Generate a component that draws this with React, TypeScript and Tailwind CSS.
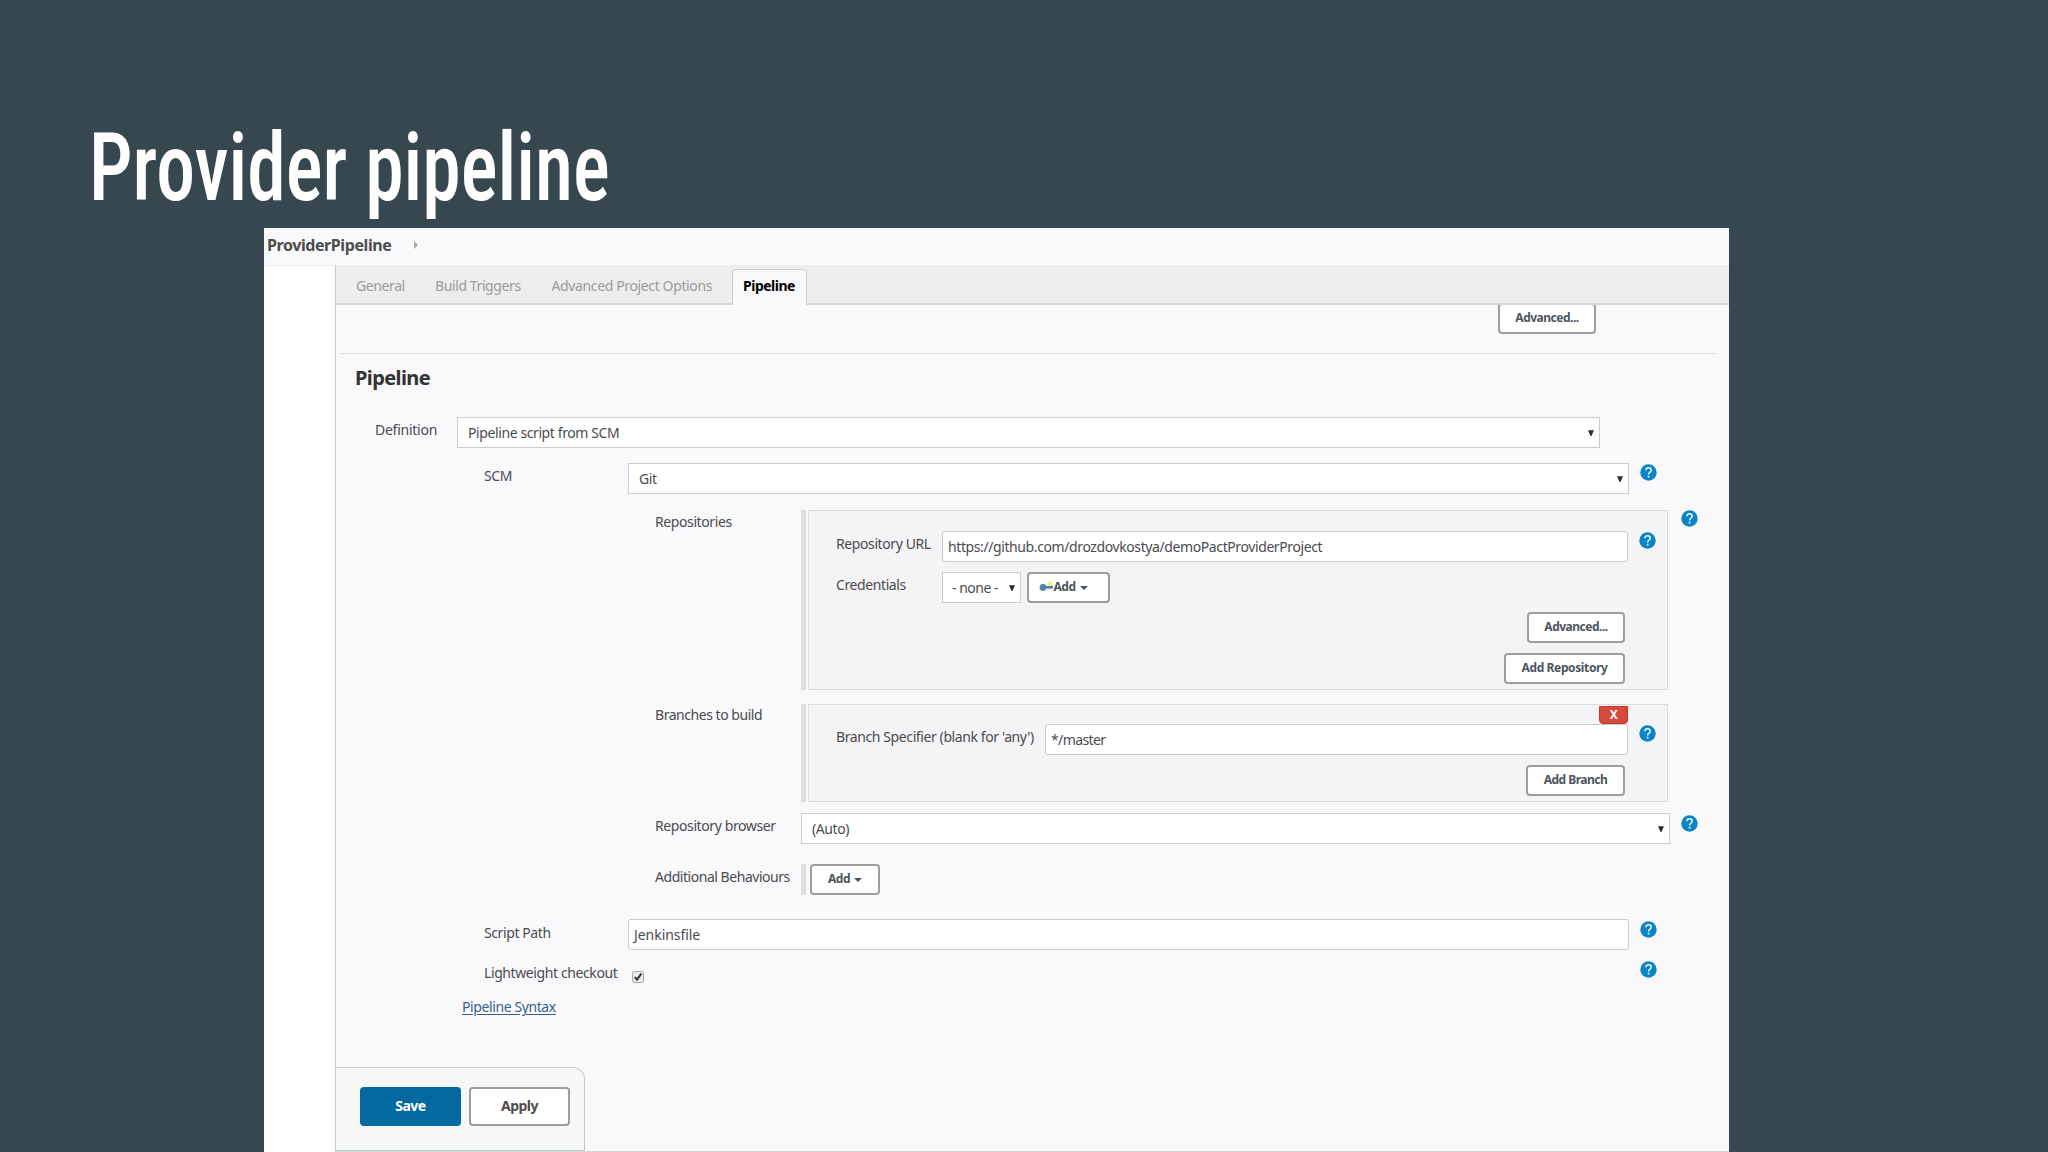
import type { ReactNode } from 'react';
import clsx from 'clsx';

const tabs = [
  { label: 'General', className: 'w-[79px]' },
  { label: 'Build Triggers', className: 'w-[116.5px]' },
  { label: 'Advanced Project Options', className: 'w-[181px] tracking-[-0.37px]' },
];

function HelpIcon({ className }: { className?: string }) {
  return (
    <svg viewBox="0 0 17 17" className={clsx('h-[17px] w-[17px] shrink-0', className)}>
      <circle cx="8.5" cy="8.5" r="8.2" fill="#0c84c6" />
      <path
        d="M5.9 6.3C6 4.7 7 3.8 8.5 3.8c1.6 0 2.7 1 2.7 2.4 0 1.9-2.6 2.1-2.6 4.2"
        fill="none"
        stroke="#e9f6fc"
        strokeWidth="1.5"
      />
      <rect x="7.7" y="11.8" width="1.8" height="1.8" rx="0.5" fill="#e9f6fc" />
    </svg>
  );
}

function SelectArrow({ className }: { className?: string }) {
  return (
    <svg viewBox="0 0 6 6" className={clsx('h-[6px] w-[6px] shrink-0', className)}>
      <path d="M0 0.3h6L3.4 6h-0.8z" fill="#2b2b2b" />
    </svg>
  );
}

function Caret() {
  return (
    <svg viewBox="0 0 8 4" className="mt-px h-[4px] w-[8px] shrink-0">
      <path d="M0 0h8L4 4z" fill="#4d545d" />
    </svg>
  );
}

function KeyIcon() {
  return (
    <svg viewBox="0 0 15 14" className="h-[14px] w-[15px] shrink-0">
      <circle cx="11" cy="4" r="2.8" fill="#f1f58e" />
      <ellipse cx="4" cy="7.4" rx="3.4" ry="3.4" fill="#4f83ab" />
      <rect x="6" y="6" width="8" height="2.6" fill="#4f83ab" />
      <rect x="6" y="9.6" width="5" height="1" fill="#d5e2ea" />
    </svg>
  );
}

function Button({ children, className }: { children: ReactNode; className?: string }) {
  return (
    <button
      className={clsx(
        'flex h-[31px] shrink-0 items-center justify-center rounded-[4px] border-2 border-[#9b9da1] bg-white pb-px text-[12px] font-bold tracking-[-0.5px] whitespace-nowrap text-[#4d545d]',
        className
      )}
    >
      {children}
    </button>
  );
}

function Select({ value, className }: { value: string; className?: string }) {
  return (
    <div
      className={clsx(
        'flex h-[31px] shrink-0 items-center justify-between border border-[#cbcacf] bg-white pr-[5px] pl-[10px] whitespace-nowrap',
        className
      )}
    >
      <span>{value}</span>
      <SelectArrow />
    </div>
  );
}

function Input({ value, className }: { value: string; className?: string }) {
  return (
    <div
      className={clsx(
        'flex h-[31px] shrink-0 items-center rounded-[3px] border border-[#cbcacf] bg-white px-[5px] whitespace-nowrap',
        className
      )}
    >
      <span>{value}</span>
    </div>
  );
}

function Row({ label, labelClass, className, children }: { label: string; labelClass: string; className: string; children: ReactNode }) {
  return (
    <div className={clsx('flex items-start', className)}>
      <div className={clsx('shrink-0 pt-[3px] whitespace-nowrap', labelClass)}>{label}</div>
      {children}
    </div>
  );
}

function Chunk({ className, children }: { className: string; children: ReactNode }) {
  return (
    <div className={clsx('flex shrink-0 gap-[2px]', className)}>
      <div className="w-[5px] bg-[#dfdee1]" />
      <div className="flex flex-1 flex-col border border-[#dddce0] bg-[#f4f3f5]">{children}</div>
    </div>
  );
}

export default function App() {
  return (
    <div className="flex h-[1152px] w-[2048px] flex-col overflow-hidden bg-[#37474f] font-['Noto_Sans','Open_Sans',sans-serif]">
      <h1 className="h-[228px] shrink-0 pt-[110px] pl-[89px] font-['Roboto_Condensed',Roboto,sans-serif] text-[95px] leading-[116px] font-medium text-white">
        <span className="inline-block origin-left scale-x-[0.817] whitespace-nowrap">Provider pipeline</span>
      </h1>

      <div className="ml-[264px] flex h-[924px] w-[1465px] shrink-0 flex-col bg-[#f9f8fb] text-[14px] leading-[20px] tracking-[-0.4px] text-[#4b4b4f]">
        <div className="flex h-[37px] shrink-0 items-center bg-[#f8f9fa] pb-[3px] pl-[3px]">
          <span className="w-[147px] text-[16px] font-bold tracking-[-0.42px] text-[#4d4d4d]">ProviderPipeline</span>
          <svg viewBox="0 0 4 8" className="h-[8px] w-[4px]">
            <path d="M0 0l4 4-4 4z" fill="#a9a9ab" />
          </svg>
        </div>

        <div className="flex min-h-0 flex-1">
          <div className="w-[71px] shrink-0 border-t border-[#ececee] bg-white" />
          <div className="flex min-w-0 flex-1 flex-col border-l border-[#c6cacd]">
            <div className="flex h-[40px] shrink-0 bg-[#ededee]">
              <div className="flex w-[396px] border-b-2 border-[#d9d9db] pt-[11px] pl-[20px] text-[#9b9b9d]">
                {tabs.map((tab) => (
                  <span key={tab.label} className={clsx('shrink-0 whitespace-nowrap', tab.className)}>
                    {tab.label}
                  </span>
                ))}
              </div>
              <div className="mt-[4px] w-[75px] rounded-t-[4px] border border-b-0 border-[#cfcfd2] bg-[#f9f9fb] pt-[6px] pl-[10px] font-bold tracking-[-0.5px] text-black">
                Pipeline
              </div>
              <div className="flex-1 border-b-2 border-[#d9d9db]" />
            </div>

            <div className="flex min-h-0 flex-1 flex-col">
              <div className="ml-[4px] flex h-[49px] w-[1375px] shrink-0 items-start overflow-hidden border-b border-[#dcdce0]">
                <Button className="-mt-[2px] ml-[1158px] w-[98px]">Advanced...</Button>
              </div>

              <h2 className="h-[63px] shrink-0 pt-[10px] pl-[19px] text-[20px] leading-[28px] font-bold tracking-[-0.6px] text-[#333]">
                Pipeline
              </h2>

              <Row label="Definition" labelClass="w-[82px] tracking-[-0.25px]" className="h-[46px] shrink-0 pl-[39px]">
                <Select value="Pipeline script from SCM" className="w-[1143px]" />
              </Row>

              <Row label="SCM" labelClass="w-[144px]" className="h-[47px] shrink-0 pl-[148px]">
                <Select value="Git" className="w-[1001px]" />
                <HelpIcon className="mt-[1px] ml-[11px]" />
              </Row>

              <Row label="Repositories" labelClass="w-[146px] pt-[2px]!" className="h-[194px] shrink-0 pl-[319px]">
                <Chunk className="h-[180px] w-[867px]">
                  <Row label="Repository URL" labelClass="w-[106px]" className="mt-[20px] pl-[27px]">
                    <Input value="https://github.com/drozdovkostya/demoPactProviderProject" className="w-[686px]" />
                    <HelpIcon className="mt-[1px] ml-[11px]" />
                  </Row>
                  <Row label="Credentials" labelClass="w-[106px]" className="mt-[10px] pl-[27px]">
                    <Select value="- none -" className="w-[79px] pl-[9px]! tracking-[-0.5px]" />
                    <Button className="ml-[6px] w-[83px] gap-[5px] pr-[10px]">
                      <span className="flex items-center">
                        <KeyIcon />
                        Add
                      </span>
                      <Caret />
                    </Button>
                  </Row>
                  <div className="mt-[9px] flex flex-col items-end gap-[10px] pr-[42px]">
                    <Button className="w-[98px]">Advanced...</Button>
                    <Button className="w-[121px] tracking-[-0.38px]">Add Repository</Button>
                  </div>
                </Chunk>
                <HelpIcon className="ml-[13px]" />
              </Row>

              <Row label="Branches to build" labelClass="w-[146px] pt-[1px]! tracking-[-0.46px]" className="h-[109px] shrink-0 pl-[319px]">
                <Chunk className="h-[98px] w-[867px]">
                  <div className="flex h-[19px] shrink-0 items-start justify-end pt-px pr-[39px]">
                    <button className="h-[18px] w-[29px] rounded-b-[4px] border border-[#c43a2d] bg-[#d6493b] text-[12px] leading-[16px] font-bold text-white">
                      X
                    </button>
                  </div>
                  <Row label="Branch Specifier (blank for 'any')" labelClass="w-[209px]" className="pl-[27px]">
                    <Input value="*/master" className="w-[583px] tracking-[-0.6px]" />
                    <HelpIcon className="mt-[1px] ml-[11px]" />
                  </Row>
                  <div className="mt-[10px] flex justify-end pr-[42px]">
                    <Button className="w-[99px]">Add Branch</Button>
                  </div>
                </Chunk>
                <div className="w-[13px]" />
              </Row>

              <Row label="Repository browser" labelClass="w-[146px]" className="h-[51px] shrink-0 pl-[319px]">
                <Select value="(Auto)" className="w-[869px]" />
                <HelpIcon className="mt-[2px] ml-[11px]" />
              </Row>

              <Row label="Additional Behaviours" labelClass="w-[146px] tracking-[-0.46px]" className="h-[55px] shrink-0 pl-[319px]">
                <div className="h-[31px] w-[5px] bg-[#dfdee1]" />
                <Button className="ml-[4px] w-[70px] gap-[4px]">
                  Add
                  <Caret />
                </Button>
              </Row>

              <Row label="Script Path" labelClass="w-[144px] pt-[4px]!" className="h-[41px] shrink-0 pl-[148px]">
                <Input value="Jenkinsfile" className="w-[1001px] tracking-[-0.05px]" />
                <HelpIcon className="mt-[2px] ml-[11px]" />
              </Row>

              <Row label="Lightweight checkout" labelClass="w-[148px]" className="h-[37px] shrink-0 pl-[148px]">
                <svg viewBox="0 0 12 12" className="mt-[11px] h-[12px] w-[12px] shrink-0">
                  <rect x="0.5" y="0.5" width="11" height="11" rx="2" fill="#ececec" stroke="#a9a9a9" />
                  <path d="M2.8 6.2l2.2 2.5 4.4-6" fill="none" stroke="#333" strokeWidth="2" />
                </svg>
                <HelpIcon className="mt-[1px] ml-[996px]" />
              </Row>

              <a className="ml-[126px] w-fit text-[#3a5f92] underline underline-offset-2">Pipeline Syntax</a>

              <div className="mt-auto flex h-[85px] items-end border-b border-[#d5d8d8]">
                <div className="flex h-[84px] w-[249px] gap-[8px] rounded-tr-[12px] border-t border-r border-b border-[#c3cbc8] bg-[#f6f8f5] pt-[19px] pl-[24px]">
                  <button className="h-[39px] w-[101px] rounded-[4px] bg-[#04699e] pb-px text-[14px] font-bold tracking-[-0.5px] text-white">
                    Save
                  </button>
                  <button className="h-[39px] w-[101px] rounded-[4px] border-2 border-[#9b9da1] bg-white pb-px text-[14px] font-bold tracking-[-0.5px] text-[#4d4d4d]">
                    Apply
                  </button>
                </div>
              </div>
            </div>
          </div>
        </div>
      </div>
    </div>
  );
}
